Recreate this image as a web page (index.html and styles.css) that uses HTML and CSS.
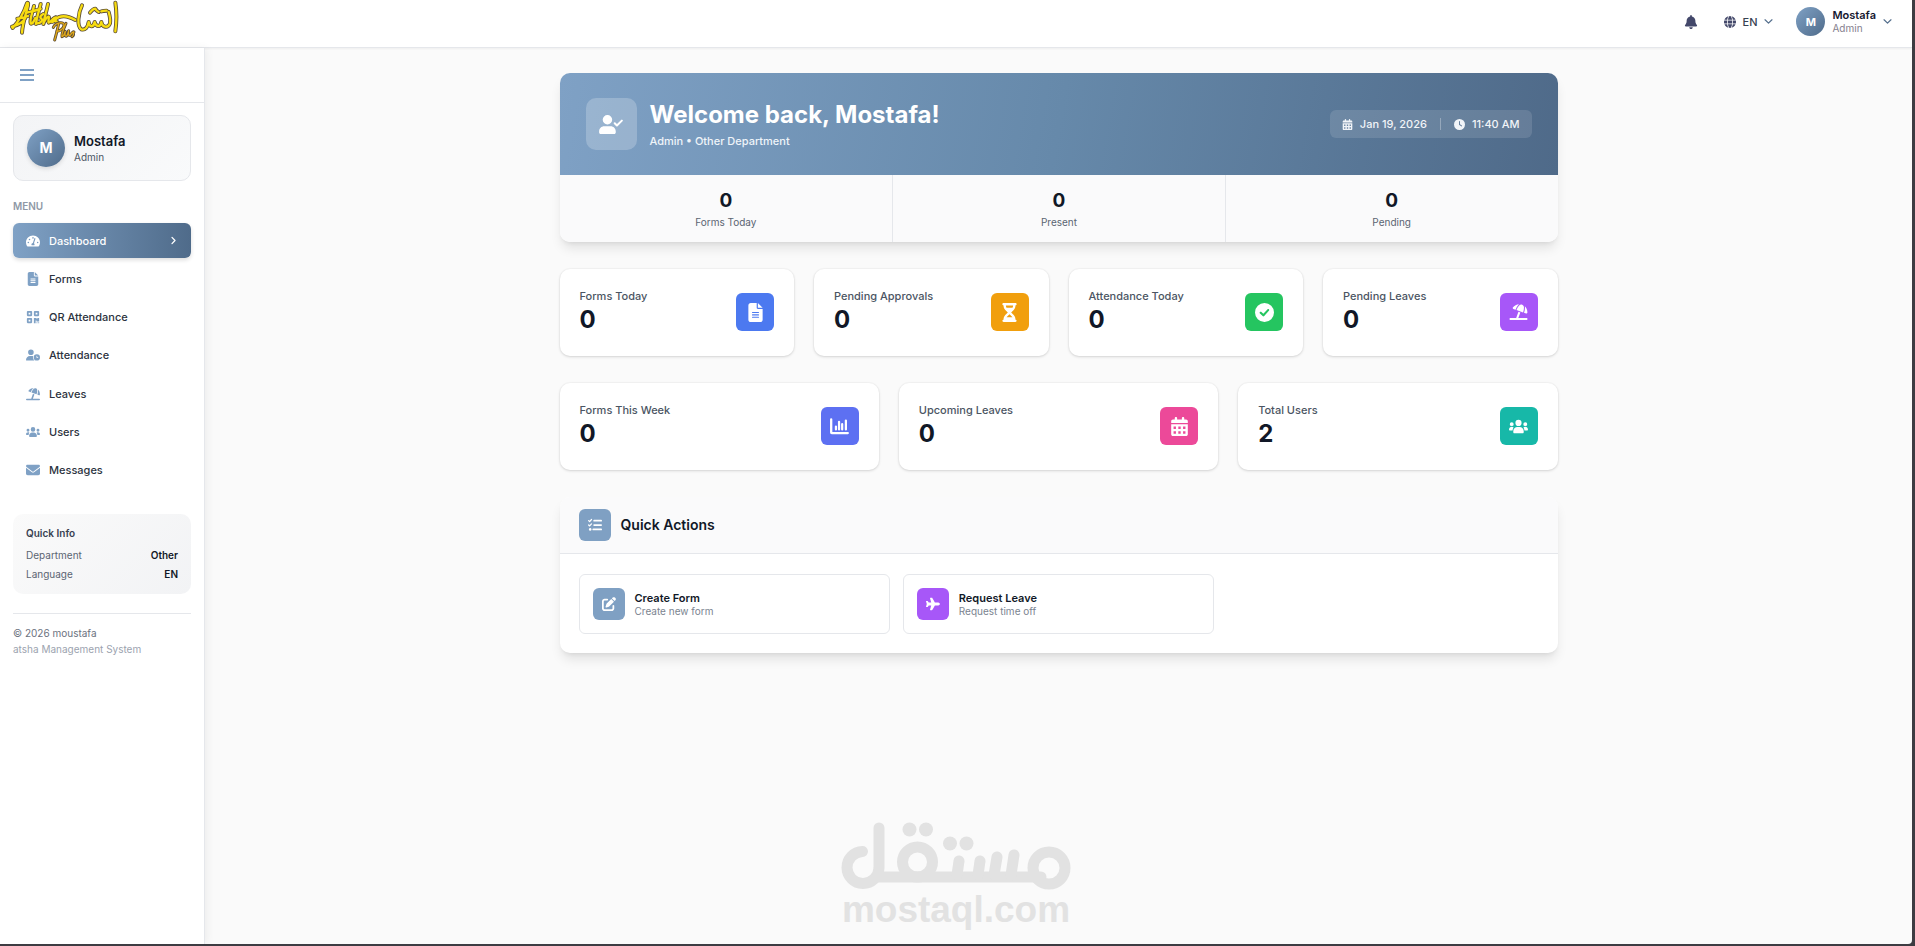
FILE: index.html
```html
<!DOCTYPE html>
<html lang="en">
<head>
<meta charset="utf-8">
<meta name="viewport" content="width=device-width, initial-scale=1">
<title>Dashboard</title>
<link rel="stylesheet" href="styles.css">
</head>
<body>
<svg class="sprite" aria-hidden="true">
  <symbol id="i-bars" viewBox="0 0 448 512"><path d="M0 64h448v66H0zM0 223h448v66H0zM0 382h448v66H0z"/></symbol>
  <symbol id="i-chevron-down" viewBox="0 0 512 512"><path d="M60 160l196 190 196-190" fill="none" stroke="currentColor" stroke-width="72" stroke-linecap="round" stroke-linejoin="round"/></symbol>
  <symbol id="i-chevron-right" viewBox="0 0 320 512"><path d="M75 80l170 176L75 432" fill="none" stroke="currentColor" stroke-width="74" stroke-linecap="round" stroke-linejoin="round"/></symbol>
  <symbol id="i-bell" viewBox="0 0 448 512"><path d="M224 0c-17.7 0-32 14.3-32 32V51.2C119 66 64 130.6 64 208v18.8c0 47-17.3 92.4-48.5 127.6l-7.4 8.3c-8.4 9.4-10.4 22.9-5.3 34.4S19.4 416 32 416H416c12.6 0 24-7.4 29.2-18.9s3.1-25-5.3-34.4l-7.4-8.3C401.3 319.2 384 273.9 384 226.8V208c0-77.4-55-142-128-156.8V32c0-17.7-14.3-32-32-32zm45.3 493.3c12-12 18.7-28.3 18.7-45.3H224 160c0 17 6.7 33.3 18.7 45.3s28.3 18.7 45.3 18.7s33.3-6.7 45.3-18.7z"/></symbol>
  <symbol id="i-globe" viewBox="0 0 512 512"><path d="M352 256c0 22.2-1.2 43.6-3.3 64H163.3c-2.2-20.4-3.3-41.8-3.3-64s1.2-43.6 3.3-64H348.7c2.2 20.4 3.3 41.8 3.3 64zm28.8-64H503.9c5.3 20.5 8.1 41.9 8.1 64s-2.8 43.5-8.1 64H380.8c2.1-20.6 3.2-42 3.2-64s-1.1-43.4-3.2-64zm112.6-32H376.7c-10-63.9-29.8-117.4-55.3-151.6c78.3 20.7 142 77.5 171.9 151.6zm-149.1 0H167.7c6.1-36.4 15.5-68.6 27-94.7c10.5-23.6 22.2-40.7 33.5-51.5C239.4 3.2 248.7 0 256 0s16.6 3.2 27.8 13.8c11.3 10.8 23 27.9 33.5 51.5c11.6 26 20.9 58.2 27 94.7zm-209 0H18.6C48.6 85.9 112.2 29.1 190.6 8.4C165.1 42.6 145.3 96.1 135.3 160zM8.1 192H131.2c-2.1 20.6-3.2 42-3.2 64s1.1 43.4 3.2 64H8.1C2.8 299.5 0 278.1 0 256s2.8-43.5 8.1-64zM194.7 446.6c-11.6-26-20.9-58.2-27-94.6H344.3c-6.1 36.4-15.5 68.6-27 94.6c-10.5 23.6-22.2 40.7-33.5 51.5C272.6 508.8 263.3 512 256 512s-16.6-3.2-27.8-13.8c-11.3-10.8-23-27.9-33.5-51.5zM135.3 352c10 63.9 29.8 117.4 55.3 151.6C112.2 482.9 48.6 426.1 18.6 352H135.3zm358.1 0c-30 74.1-93.6 130.9-171.9 151.6c25.5-34.2 45.2-87.7 55.3-151.6H493.4z"/></symbol>
  <symbol id="i-gauge" viewBox="0 0 576 512"><path fill-rule="evenodd" d="M288 32C129 32 0 161 0 320c0 52.8 14.3 102.3 39.1 144.8C44.8 474.6 55.6 480 67 480H509c11.4 0 22.2-5.4 27.9-15.2C561.8 422.3 576 372.8 576 320 576 161 447 32 288 32zM96 288a32 32 0 1 1 0 64 32 32 0 1 1 0-64zM144 160a32 32 0 1 1 0 64 32 32 0 1 1 0-64zM288 96a32 32 0 1 1 0 64 32 32 0 1 1 0-64zM480 288a32 32 0 1 1 0 64 32 32 0 1 1 0-64zM374 138c13 4 19 18 15 30l-62 184c16 12 25 29 25 48 0 12-3 22-9 32H233c-6-10-9-20-9-32 0-35 27-63 58-64l62-183c4-13 18-19 30-15z"/></symbol>
  <symbol id="i-file" viewBox="0 0 384 512"><path fill-rule="evenodd" d="M64 0C28.700 0 0 28.700 0 64V448c0 35.300 28.700 64 64 64H320c35.300 0 64-28.700 64-64V160H256c-17.700 0-32-14.300-32-32V0H64zM256 0V128H384L256 0zM112 240H272c8.800 0 16 7.200 16 16s-7.200 16-16 16H112c-8.800 0-16-7.200-16-16s7.200-16 16-16zm0 64H272c8.800 0 16 7.200 16 16s-7.200 16-16 16H112c-8.800 0-16-7.200-16-16s7.200-16 16-16zm0 64H272c8.800 0 16 7.200 16 16s-7.200 16-16 16H112c-8.800 0-16-7.200-16-16s7.200-16 16-16z"/></symbol>
  <symbol id="i-qrcode" viewBox="0 0 448 512"><path fill-rule="evenodd" d="M32 32H160c18 0 32 14 32 32V192c0 18-14 32-32 32H32c-18 0-32-14-32-32V64c0-18 14-32 32-32zM64 96v64h64V96zM288 32H416c18 0 32 14 32 32V192c0 18-14 32-32 32H288c-18 0-32-14-32-32V64c0-18 14-32 32-32zM320 96v64h64V96zM32 288H160c18 0 32 14 32 32V448c0 18-14 32-32 32H32c-18 0-32-14-32-32V320c0-18 14-32 32-32zM64 352v64h64V352zM256 288h96v32h32v-32h64v128h-96v-32h-32v96h-64zM352 448h32v32h-32zM416 448h32v32h-32z"/></symbol>
  <symbol id="i-user-clock" viewBox="0 0 640 512"><path fill-rule="evenodd" d="M224 0a128 128 0 1 1 0 256A128 128 0 1 1 224 0zM178.300 304h91.400c20.600 0 40.400 3.500 58.800 9.900C323 331 320 349.100 320 368c0 59.500 29.500 112.100 74.800 144H29.700C13.300 512 0 498.700 0 482.300C0 383.800 79.800 304 178.300 304zM352 368a144 144 0 1 1 288 0 144 144 0 1 1-288 0zm144-80c-8.800 0-16 7.200-16 16v64c0 8.800 7.200 16 16 16h48c8.800 0 16-7.200 16-16s-7.200-16-16-16H512V304c0-8.800-7.200-16-16-16z"/></symbol>
  <symbol id="i-user-check" viewBox="0 0 640 512"><path d="M96 128a128 128 0 1 1 256 0A128 128 0 1 1 96 128zM0 440C0 365 61 304 136 304H312C387 304 448 365 448 440V470C448 493 429 512 406 512H42C19 512 0 493 0 470z"/><path d="M420 222l60 62L612 152" fill="none" stroke="currentColor" stroke-width="54" stroke-linecap="round" stroke-linejoin="round"/></symbol>
  <symbol id="i-beach" viewBox="0 0 576 512"><path d="M346.300 271.800l-60.100-21.900L214 448H32c-17.700 0-32 14.300-32 32s14.300 32 32 32H544c17.700 0 32-14.300 32-32s-14.300-32-32-32H282.100l64.100-176.200zm121.100-.2l-3.300 9.100 67.700 24.600c18.100 6.600 38-4.200 39.600-23.400c6.500-78.500-23.900-155.500-80.800-208.500c2 8 3.200 16.300 3.400 24.800l.2 6c1.800 57-7.300 113.800-26.800 167.400zM462 99.100c-1.100-34.400-22.500-64.800-54.400-77.400c-.9-.4-1.900-.7-2.800-1.100c-33-11.700-69.800-2.400-93.100 23.800l-4 4.500C272.400 88.300 245 134.200 226.800 184l-3.300 9.100L434 269.700l3.300-9.100c18.100-49.800 26.600-102.500 24.900-155.500l-.2-6zM107.200 112.900c-11.100 15.700-2.800 36.800 15.300 43.400l71 25.800 3.300-9.100c19.500-53.600 49.100-103 87.100-145.500l4-4.500c6.200-6.900 13.100-13 20.500-18.200c-79.600 2.500-154.700 42.200-201.200 108z"/></symbol>
  <symbol id="i-users" viewBox="0 0 640 512"><path d="M320 32a104 104 0 1 1 0 208 104 104 0 1 1 0-208zM26 176a66 66 0 1 1 132 0 66 66 0 1 1-132 0zM482 176a66 66 0 1 1 132 0 66 66 0 1 1-132 0zM0 360c0-54 42-92 96-92 22 0 42 6 58 18-22 30-34 66-34 106H32c-18 0-32-14-32-32zM520 392c0-40-12-76-34-106 16-12 36-18 58-18 54 0 96 38 96 92 0 18-14 32-32 32zM144 420c0-82 60-144 140-144h72c80 0 140 62 140 144v28c0 18-14 32-32 32H176c-18 0-32-14-32-32z"/></symbol>
  <symbol id="i-envelope" viewBox="0 0 512 512"><path d="M48 64C21.500 64 0 85.500 0 112c0 15.100 7.100 29.300 19.200 38.400L236.800 313.600c11.400 8.500 27 8.500 38.400 0L492.800 150.400c12.100-9.100 19.200-23.300 19.200-38.400c0-26.500-21.500-48-48-48H48zM0 176V384c0 35.300 28.700 64 64 64H448c35.300 0 64-28.700 64-64V176L294.400 339.200c-22.800 17.100-54 17.100-76.800 0L0 176z"/></symbol>
  <symbol id="i-calendar" viewBox="0 0 448 512"><path fill-rule="evenodd" d="M128 0c17.700 0 32 14.300 32 32V64H288V32c0-17.700 14.300-32 32-32s32 14.300 32 32V64h48c26.500 0 48 21.500 48 48v48H0V112C0 85.500 21.500 64 48 64H96V32c0-17.700 14.300-32 32-32zM0 192H448V464c0 26.500-21.500 48-48 48H48c-26.500 0-48-21.500-48-48V192zM64 256v64h64v-64zM192 256v64h64v-64zM320 256v64h64v-64zM64 384v64h64v-64zM192 384v64h64v-64zM320 384v64h64v-64z"/></symbol>
  <symbol id="i-clock" viewBox="0 0 512 512"><path fill-rule="evenodd" d="M256 0a256 256 0 1 1 0 512A256 256 0 1 1 256 0zM232 120V256c0 8 4 15.500 10.700 20l96 64c11 7.400 25.900 4.400 33.300-6.700s4.400-25.900-6.700-33.300L280 243.200V120c0-13.300-10.700-24-24-24s-24 10.700-24 24z"/></symbol>
  <symbol id="i-hourglass" viewBox="0 0 384 512"><path fill-rule="evenodd" d="M32 0C14.300 0 0 14.300 0 32S14.300 64 32 64V75c0 42.400 16.900 83.100 46.900 113.100L146.700 256 78.900 323.900C48.900 353.900 32 394.600 32 437v11c-17.700 0-32 14.300-32 32s14.300 32 32 32H352c17.700 0 32-14.300 32-32s-14.300-32-32-32V437c0-42.400-16.900-83.100-46.900-113.100L237.300 256l67.900-67.900c30-30 46.900-70.700 46.900-113.100V64c17.700 0 32-14.300 32-32s-14.300-32-32-32H32zM96 75V64H288V75c0 19-5.600 37.400-16 53H112c-10.300-15.600-16-34-16-53zm16 309c3.500-5.300 7.600-10.300 12.100-14.900L192 301.300l67.900 67.900c4.600 4.600 8.600 9.600 12.100 14.900H112z"/></symbol>
  <symbol id="i-check" viewBox="0 0 512 512"><path fill-rule="evenodd" d="M256 512A256 256 0 1 0 256 0a256 256 0 1 0 0 512zM374 212L248 352c-12 13-30 13-42 1l-72-70c-12-12-12-29-1-40s28-12 40-1l52 50L334 172c11-12 29-13 40-2s11 30 0 42z"/></symbol>
  <symbol id="i-chart" viewBox="0 0 512 512"><path d="M32 64v352c0 9 7 16 16 16h432" fill="none" stroke="currentColor" stroke-width="62" stroke-linecap="round"/><path d="M160 256v80M244 128v208M328 192v144M428 96v240" fill="none" stroke="currentColor" stroke-width="60" stroke-linecap="round"/></symbol>
  <symbol id="i-tasks" viewBox="0 0 512 512"><path d="M24 96l36 34 68-76M24 256l36 34 68-76" fill="none" stroke="currentColor" stroke-width="46" stroke-linecap="round" stroke-linejoin="round"/><path d="M224 96h256M224 256h256M192 416h288" fill="none" stroke="currentColor" stroke-width="64" stroke-linecap="round"/><circle cx="80" cy="416" r="46"/></symbol>
  <symbol id="i-pen" viewBox="0 0 512 512"><path d="M471.600 21.700c-21.900-21.900-57.300-21.900-79.200 0L362.300 51.700l97.900 97.900 30.100-30.100c21.900-21.900 21.900-57.300 0-79.200L471.600 21.700zm-299.200 220c-6.100 6.100-10.800 13.600-13.500 21.900l-29.600 88.800c-2.900 8.600-.6 18.100 5.800 24.600s15.900 8.700 24.600 5.800l88.800-29.600c8.200-2.700 15.700-7.400 21.900-13.500L437.700 172.300 339.700 74.300 172.400 241.700zM96 64C43 64 0 107 0 160V416c0 53 43 96 96 96H352c53 0 96-43 96-96V320c0-17.700-14.300-32-32-32s-32 14.300-32 32v96c0 17.700-14.300 32-32 32H96c-17.700 0-32-14.300-32-32V160c0-17.700 14.300-32 32-32h96c17.700 0 32-14.300 32-32s-14.300-32-32-32H96z"/></symbol>
  <symbol id="i-plane" viewBox="0 0 576 512"><path d="M482.300 192c34.200 0 93.700 29 93.700 64c0 36-59.500 64-93.700 64l-116.600 0L265.200 495.900c-5.700 10-16.300 16.100-27.800 16.100l-56.200 0c-10.600 0-18.300-10.200-15.400-20.400l49-171.600L112 320 68.800 377.600c-3 4-7.800 6.400-12.800 6.400l-42 0c-7.800 0-14-6.300-14-14c0-1.300 .2-2.600 .5-3.900L32 256 .5 145.900c-.4-1.300-.5-2.600-.5-3.900c0-7.800 6.300-14 14-14l42 0c5 0 9.800 2.400 12.800 6.400L112 192l102.900 0-49-171.600C162.900 10.200 170.600 0 181.200 0l56.200 0c11.500 0 22.100 6.200 27.800 16.100L365.700 192l116.600 0z"/></symbol>
</svg>

<div class="app">
  <header class="topbar">
    <a class="brand" href="#" aria-label="Atsha Plus">
      <svg class="brand-logo" viewBox="0 0 348 132" aria-hidden="true">
        <defs>
          <g id="calligraphy">
            <path d="M18 80C34 76 52 66 58 54M20 84C36 66 52 44 62 12C64 6 68 8 66 16C62 36 50 66 48 98M34 56C44 54 56 52 66 48"/>
            <path d="M84 18C80 36 70 60 74 70C78 74 84 64 88 54M62 38C76 34 92 32 104 26"/>
            <path d="M104 12C100 30 92 52 90 72M112 42C104 46 100 52 106 56C112 60 104 70 94 70"/>
            <path d="M126 12C122 34 114 54 112 72C116 60 124 48 128 50C132 52 124 64 128 68C134 68 142 52 150 52C154 54 144 66 138 66M150 52C148 60 148 66 154 66"/>
            <path d="M146 60C164 42 184 46 208 60"/>
            <path d="M228 16C216 40 212 78 226 88C238 92 246 80 248 66C250 82 262 84 266 66C270 80 282 84 286 66C288 82 306 86 312 70C314 60 312 50 308 36"/>
            <path d="M252 38C258 30 264 26 268 26C270 30 274 34 278 36M286 34C292 32 296 32 302 32"/>
            <path d="M328 8C332 34 332 66 328 94"/>
          </g>
          <g id="calligraphy-plus">
            <path d="M158 72C154 90 150 106 146 120M142 82C150 66 176 64 174 76C172 88 160 94 152 94"/>
            <path d="M180 70C172 88 166 104 168 110C172 110 176 100 178 94C176 104 176 110 182 108C186 104 186 98 188 92C186 102 188 110 194 104C196 100 202 94 204 96C198 98 208 104 198 110"/>
          </g>
        </defs>
        <use href="#calligraphy" class="ink-edge"/>
        <use href="#calligraphy" class="ink-fill"/>
        <use href="#calligraphy-plus" class="ink-edge ink-edge-small"/>
        <use href="#calligraphy-plus" class="ink-fill ink-fill-small"/>
      </svg>
    </a>
    <div class="topbar-tools">
      <button class="tool tool-bell" type="button" aria-label="Notifications"><svg class="icon"><use href="#i-bell"/></svg></button>
      <button class="tool tool-lang" type="button"><svg class="icon icon-12"><use href="#i-globe"/></svg><span>EN</span><svg class="icon icon-caret"><use href="#i-chevron-down"/></svg></button>
      <button class="tool tool-user" type="button">
        <span class="avatar avatar-sm">M</span>
        <span class="who"><strong>Mostafa</strong><small>Admin</small></span>
        <svg class="icon icon-caret"><use href="#i-chevron-down"/></svg>
      </button>
    </div>
  </header>

  <div class="shell">
    <aside class="sidebar">
      <div class="sidebar-head">
        <button class="menu-toggle" type="button" aria-label="Toggle menu"><svg class="icon"><use href="#i-bars"/></svg></button>
      </div>
      <div class="sidebar-body">
        <div class="profile">
          <span class="avatar">M</span>
          <div><p class="profile-name">Mostafa</p><p class="profile-role">Admin</p></div>
        </div>
        <h2 class="menu-title">MENU</h2>
        <nav>
          <ul class="menu">
            <li><a class="menu-link active" href="#"><svg class="icon"><use href="#i-gauge"/></svg><span>Dashboard</span><svg class="icon menu-caret"><use href="#i-chevron-right"/></svg></a></li>
            <li><a class="menu-link" href="#"><svg class="icon"><use href="#i-file"/></svg><span>Forms</span></a></li>
            <li><a class="menu-link" href="#"><svg class="icon"><use href="#i-qrcode"/></svg><span>QR Attendance</span></a></li>
            <li><a class="menu-link" href="#"><svg class="icon"><use href="#i-user-clock"/></svg><span>Attendance</span></a></li>
            <li><a class="menu-link" href="#"><svg class="icon"><use href="#i-beach"/></svg><span>Leaves</span></a></li>
            <li><a class="menu-link" href="#"><svg class="icon"><use href="#i-users"/></svg><span>Users</span></a></li>
            <li><a class="menu-link" href="#"><svg class="icon"><use href="#i-envelope"/></svg><span>Messages</span></a></li>
          </ul>
        </nav>
        <section class="info">
          <h3>Quick Info</h3>
          <dl>
            <div><dt>Department</dt><dd>Other</dd></div>
            <div><dt>Language</dt><dd>EN</dd></div>
          </dl>
        </section>
        <footer class="sidebar-foot">
          <p>© 2026 moustafa</p>
          <p class="faint">atsha Management System</p>
        </footer>
      </div>
    </aside>

    <main class="main">
      <div class="container">
        <section class="hero">
          <div class="hero-top">
            <span class="hero-icon"><svg class="icon"><use href="#i-user-check"/></svg></span>
            <div class="hero-text">
              <h1>Welcome back, Mostafa!</h1>
              <p>Admin • Other Department</p>
            </div>
            <div class="stamp">
              <svg class="icon"><use href="#i-calendar"/></svg><span>Jan 19, 2026</span>
              <i class="stamp-line"></i>
              <svg class="icon"><use href="#i-clock"/></svg><span>11:40 AM</span>
            </div>
          </div>
          <div class="hero-stats">
            <div><b>0</b><span>Forms Today</span></div>
            <div><b>0</b><span>Present</span></div>
            <div><b>0</b><span>Pending</span></div>
          </div>
        </section>

        <section class="cards cards-4">
          <article class="card"><div><h3>Forms Today</h3><b>0</b></div><span class="badge blue"><svg class="icon"><use href="#i-file"/></svg></span></article>
          <article class="card"><div><h3>Pending Approvals</h3><b>0</b></div><span class="badge amber"><svg class="icon"><use href="#i-hourglass"/></svg></span></article>
          <article class="card"><div><h3>Attendance Today</h3><b>0</b></div><span class="badge green"><svg class="icon"><use href="#i-check"/></svg></span></article>
          <article class="card"><div><h3>Pending Leaves</h3><b>0</b></div><span class="badge purple"><svg class="icon icon-short"><use href="#i-beach"/></svg></span></article>
        </section>

        <section class="cards cards-3">
          <article class="card"><div><h3>Forms This Week</h3><b>0</b></div><span class="badge indigo"><svg class="icon"><use href="#i-chart"/></svg></span></article>
          <article class="card"><div><h3>Upcoming Leaves</h3><b>0</b></div><span class="badge pink"><svg class="icon"><use href="#i-calendar"/></svg></span></article>
          <article class="card"><div><h3>Total Users</h3><b>2</b></div><span class="badge teal"><svg class="icon"><use href="#i-users"/></svg></span></article>
        </section>

        <section class="panel">
          <header class="panel-head">
            <span class="chip steel"><svg class="icon"><use href="#i-tasks"/></svg></span>
            <h2>Quick Actions</h2>
          </header>
          <div class="panel-body">
            <a class="action" href="#"><span class="chip steel"><svg class="icon"><use href="#i-pen"/></svg></span><span class="action-text"><strong>Create Form</strong><small>Create new form</small></span></a>
            <a class="action" href="#"><span class="chip purple"><svg class="icon"><use href="#i-plane"/></svg></span><span class="action-text"><strong>Request Leave</strong><small>Request time off</small></span></a>
          </div>
        </section>
      </div>
    </main>
  </div>
</div>

<div class="watermark">
  <svg class="watermark-mark" viewBox="0 0 230 68" role="img" aria-label="مستقل">
    <g fill="none" stroke="currentColor" stroke-width="11" stroke-linecap="round">
      <path d="M21.500 29.500A16 16 0 1 0 38 46V6"/>
      <path d="M36 55H200"/>
      <circle cx="76.500" cy="40" r="15"/>
      <circle cx="208" cy="46" r="16"/>
      <path d="M118 39l-2 14M139 39l-2 14M156 35l-3 18M173 33l-3 20"/>
    </g>
    <g fill="currentColor"><circle cx="68.500" cy="7.500" r="7"/><circle cx="85" cy="7.500" r="7"/><circle cx="109" cy="21.500" r="7"/><circle cx="125.500" cy="21.500" r="7"/></g>
  </svg>
  <span>mostaql.com</span>
</div>
</body>
</html>
```
FILE: styles.css
```css
:root {
  --ink: #111827;
  --text: #374151;
  --muted: #6b7280;
  --line: #e5e7eb;
  --steel: #7fa1c5;
  --steel-dark: #4f6b8a;
}

* {
  box-sizing: border-box;
}

body,
h1,
h2,
h3,
p,
ul,
dl,
dd {
  margin: 0;
}

body {
  position: relative;
  min-height: 100vh;
  padding: 0 3px 2px 0;
  background: #3d3c42;
  color: var(--ink);
  font-family: Inter, "Liberation Sans", sans-serif;
  font-size: 11px;
  line-height: 16px;
}

a {
  color: inherit;
  text-decoration: none;
}

button {
  padding: 0;
  border: 0;
  background: none;
  color: inherit;
  font: inherit;
  cursor: pointer;
}

.sprite {
  position: absolute;
  width: 0;
  height: 0;
}

.icon {
  flex: none;
  width: 14px;
  height: 14px;
  fill: currentColor;
}

.app {
  display: flex;
  flex-direction: column;
  min-height: calc(100vh - 2px);
  overflow: hidden;
  border-bottom-right-radius: 4px;
  background: #fafafa;
}

/* Top bar */
.topbar {
  display: flex;
  justify-content: space-between;
  align-items: flex-start;
  min-height: 48px;
  padding: 0 20px 0 6px;
  border-bottom: 1px solid var(--line);
  background: #fff;
  box-shadow: 0 1px 2px rgba(0, 0, 0, 0.05);
}

.brand-logo {
  display: block;
  width: 116px;
  height: 44px;
}

.ink-edge,
.ink-fill {
  fill: none;
  stroke-linecap: round;
  stroke-linejoin: round;
}

.ink-edge {
  stroke: #5a4c38;
  stroke-width: 12;
}

.ink-fill {
  stroke: #f7dc10;
  stroke-width: 7;
}

.ink-edge-small {
  stroke-width: 9;
}

.ink-fill-small {
  stroke: #e0a818;
  stroke-width: 4;
}

.topbar-tools {
  display: flex;
  align-items: center;
  gap: 23px;
  padding-top: 7px;
}

.tool {
  display: flex;
  align-items: center;
  color: #43486a;
}

.tool-bell {
  margin-right: 3px;
}

.tool-lang {
  gap: 7px;
  color: var(--text);
  font-weight: 500;
}

.tool-user {
  gap: 7px;
}

.icon-12 {
  width: 12px;
  height: 12px;
  color: #43486a;
}

.icon-caret {
  width: 9px;
  height: 9px;
  color: #56708e;
}

.who {
  display: grid;
  text-align: left;
  line-height: 13px;
}

.who strong {
  color: #16182f;
  font-weight: 600;
}

.who small {
  color: #85808e;
  font-size: 10px;
  line-height: 12px;
}

.avatar {
  display: grid;
  flex: none;
  place-items: center;
  width: 38px;
  height: 38px;
  border-radius: 50%;
  background: linear-gradient(135deg, var(--steel), var(--steel-dark));
  box-shadow: 0 2px 4px rgba(0, 0, 0, 0.12);
  color: #fff;
  font-size: 14px;
  font-weight: 700;
}

.avatar-sm {
  width: 29px;
  height: 29px;
  box-shadow: none;
  font-size: 11px;
}

/* Sidebar */
.shell {
  display: flex;
  flex: 1;
}

.sidebar {
  flex: none;
  width: 205px;
  border-right: 1px solid var(--line);
  background: #fff;
  box-shadow: 2px 0 8px rgba(0, 0, 0, 0.06);
}

.sidebar-head {
  padding: 18px 20px;
  border-bottom: 1px solid var(--line);
}

.menu-toggle {
  display: block;
  color: var(--steel);
}

.menu-toggle .icon {
  display: block;
  width: 14px;
  height: 18px;
}

.sidebar-body {
  padding: 12px 13px;
}

.profile {
  display: flex;
  align-items: center;
  gap: 9px;
  padding: 13px;
  border: 1px solid var(--line);
  border-radius: 10px;
  background: linear-gradient(135deg, #f3f4f6, #f9fafb);
}

.profile-name {
  padding-top: 2px;
  font-size: 13px;
  font-weight: 600;
}

.profile-role {
  color: #4b5563;
  font-size: 10px;
}

.menu-title {
  margin: 17px 0 9px;
  color: #8f99a6;
  font-size: 10px;
  font-weight: 600;
}

.menu {
  display: flex;
  flex-direction: column;
  justify-content: space-between;
  min-height: 265px;
  padding: 0;
  list-style: none;
}

.menu-link {
  display: flex;
  align-items: center;
  gap: 9px;
  min-height: 35px;
  padding: 0 13px;
  border-radius: 6px;
  color: #2c3340;
  font-weight: 500;
}

.menu-link .icon {
  color: var(--steel);
}

.menu-link.active {
  background: linear-gradient(90deg, var(--steel), var(--steel-dark));
  box-shadow: 0 2px 4px rgba(0, 0, 0, 0.14);
  color: #fff;
}

.menu-link.active .icon {
  color: #fff;
}

.menu-link .menu-caret {
  width: 9px;
  height: 9px;
  margin-left: auto;
}

.info {
  margin-top: 26px;
  padding: 11px 13px 12px;
  border-radius: 10px;
  background: linear-gradient(135deg, #fafafa, #f2f3f5);
  font-size: 10px;
}

.info h3 {
  color: var(--text);
  font-size: 10px;
  font-weight: 600;
}

.info dl {
  display: grid;
  gap: 3px;
  padding-top: 6px;
}

.info dl div {
  display: flex;
  justify-content: space-between;
}

.info dt {
  color: #5b6572;
}

.info dd {
  font-weight: 600;
}

.sidebar-foot {
  margin-top: 19px;
  padding-top: 11px;
  border-top: 1px solid var(--line);
  color: var(--muted);
  font-size: 10px;
}

.sidebar-foot .faint {
  color: #9ca3af;
}

/* Main column */
.main {
  flex: 1;
  min-width: 0;
  padding: 25px 20px;
}

.container {
  display: grid;
  gap: 27px;
  max-width: 998px;
  margin: 0 auto;
}

.hero,
.panel {
  overflow: hidden;
  border-radius: 10px;
  background: #fff;
  box-shadow: 0 8px 12px -2px rgba(0, 0, 0, 0.1), 0 3px 5px -3px rgba(0, 0, 0, 0.1);
}

.hero-top {
  display: flex;
  align-items: center;
  gap: 13px;
  padding: 25px 26px;
  background: linear-gradient(100deg, var(--steel), #6689aa 50%, #4f6a89);
  color: #fff;
}

.hero-icon {
  display: grid;
  place-items: center;
  width: 51px;
  height: 52px;
  border-radius: 10px;
  background: rgba(255, 255, 255, 0.22);
}

.hero-icon .icon {
  width: 24px;
  height: 19px;
}

.hero-text {
  flex: 1;
}

.hero-text h1 {
  font-size: 24px;
  font-weight: 700;
  line-height: 30px;
}

.hero-text p {
  padding-top: 3px;
  color: #eff4f9;
  font-weight: 500;
}

.stamp {
  display: flex;
  align-items: center;
  gap: 7px;
  padding: 6px 12px;
  border-radius: 6px;
  background: rgba(255, 255, 255, 0.12);
  color: #f1f4f8;
  font-weight: 500;
}

.stamp .icon {
  width: 11px;
  height: 11px;
}

.stamp-line {
  width: 1px;
  height: 12px;
  margin: 0 6px;
  background: rgba(255, 255, 255, 0.3);
}

.hero-stats {
  display: grid;
  grid-template-columns: repeat(3, 1fr);
  background: #fafafb;
}

.hero-stats div {
  display: grid;
  padding: 13px 13px 12px;
  text-align: center;
}

.hero-stats div + div {
  border-left: 1px solid var(--line);
}

.hero-stats b {
  font-size: 19px;
  line-height: 26px;
}

.hero-stats span {
  color: #5b6572;
  font-size: 10px;
  line-height: 16px;
}

.cards {
  display: grid;
  gap: 20px;
}

.cards-4 {
  grid-template-columns: repeat(4, 1fr);
}

.cards-3 {
  grid-template-columns: repeat(3, 1fr);
}

.card {
  display: flex;
  justify-content: space-between;
  align-items: center;
  padding: 19px 20px 20px;
  border-radius: 10px;
  background: #fff;
  box-shadow: 0 0 0 1px rgba(0, 0, 0, 0.02), 0 1px 3px rgba(0, 0, 0, 0.14);
}

.card h3 {
  color: #4b5563;
  font-size: 11px;
  font-weight: 500;
}

.card b {
  display: block;
  font-size: 24px;
  line-height: 32px;
}

.badge,
.chip {
  display: grid;
  flex: none;
  place-items: center;
  width: 38px;
  height: 38px;
  border-radius: 6px;
  color: #fff;
}

.badge .icon {
  width: 19px;
  height: 19px;
}

.badge .icon-short {
  height: 16px;
}

.chip {
  width: 32px;
  height: 32px;
}

.blue { background: #4c79f0; }
.amber { background: #f19f0d; }
.green { background: #25c560; }
.purple { background: #a757f8; }
.indigo { background: #5d70f2; }
.pink { background: #ec4999; }
.teal { background: #17b8a8; }
.steel { background: #7fa0c3; }

.panel-head {
  display: flex;
  align-items: center;
  gap: 10px;
  padding: 12px 19px;
  border-bottom: 1px solid var(--line);
  background: #fafafb;
}

.panel-head h2 {
  font-size: 14px;
  font-weight: 600;
  line-height: 20px;
}

.panel-body {
  display: grid;
  grid-template-columns: repeat(3, 1fr);
  gap: 13px;
  padding: 20px 19px 19px;
}

.action {
  display: flex;
  align-items: center;
  gap: 10px;
  padding: 13px;
  border: 1px solid var(--line);
  border-radius: 6px;
}

.action-text {
  display: grid;
}

.action-text strong {
  font-weight: 600;
  line-height: 14px;
}

.action-text small {
  color: #7b8490;
  font-size: 10px;
  line-height: 13px;
}

/* Watermark lies over the page, centred at the bottom */
.watermark {
  position: absolute;
  right: 3px;
  bottom: 16px;
  left: 0;
  display: grid;
  justify-items: center;
  color: #e2e2e2;
  font-family: "Liberation Sans", sans-serif;
  font-size: 37px;
  font-weight: 700;
  line-height: 40px;
  pointer-events: none;
}

.watermark-mark {
  width: 230px;
  height: 68px;
}

@media (max-width: 1100px) {
  .cards-4,
  .panel-body {
    grid-template-columns: repeat(2, 1fr);
  }
}
```
